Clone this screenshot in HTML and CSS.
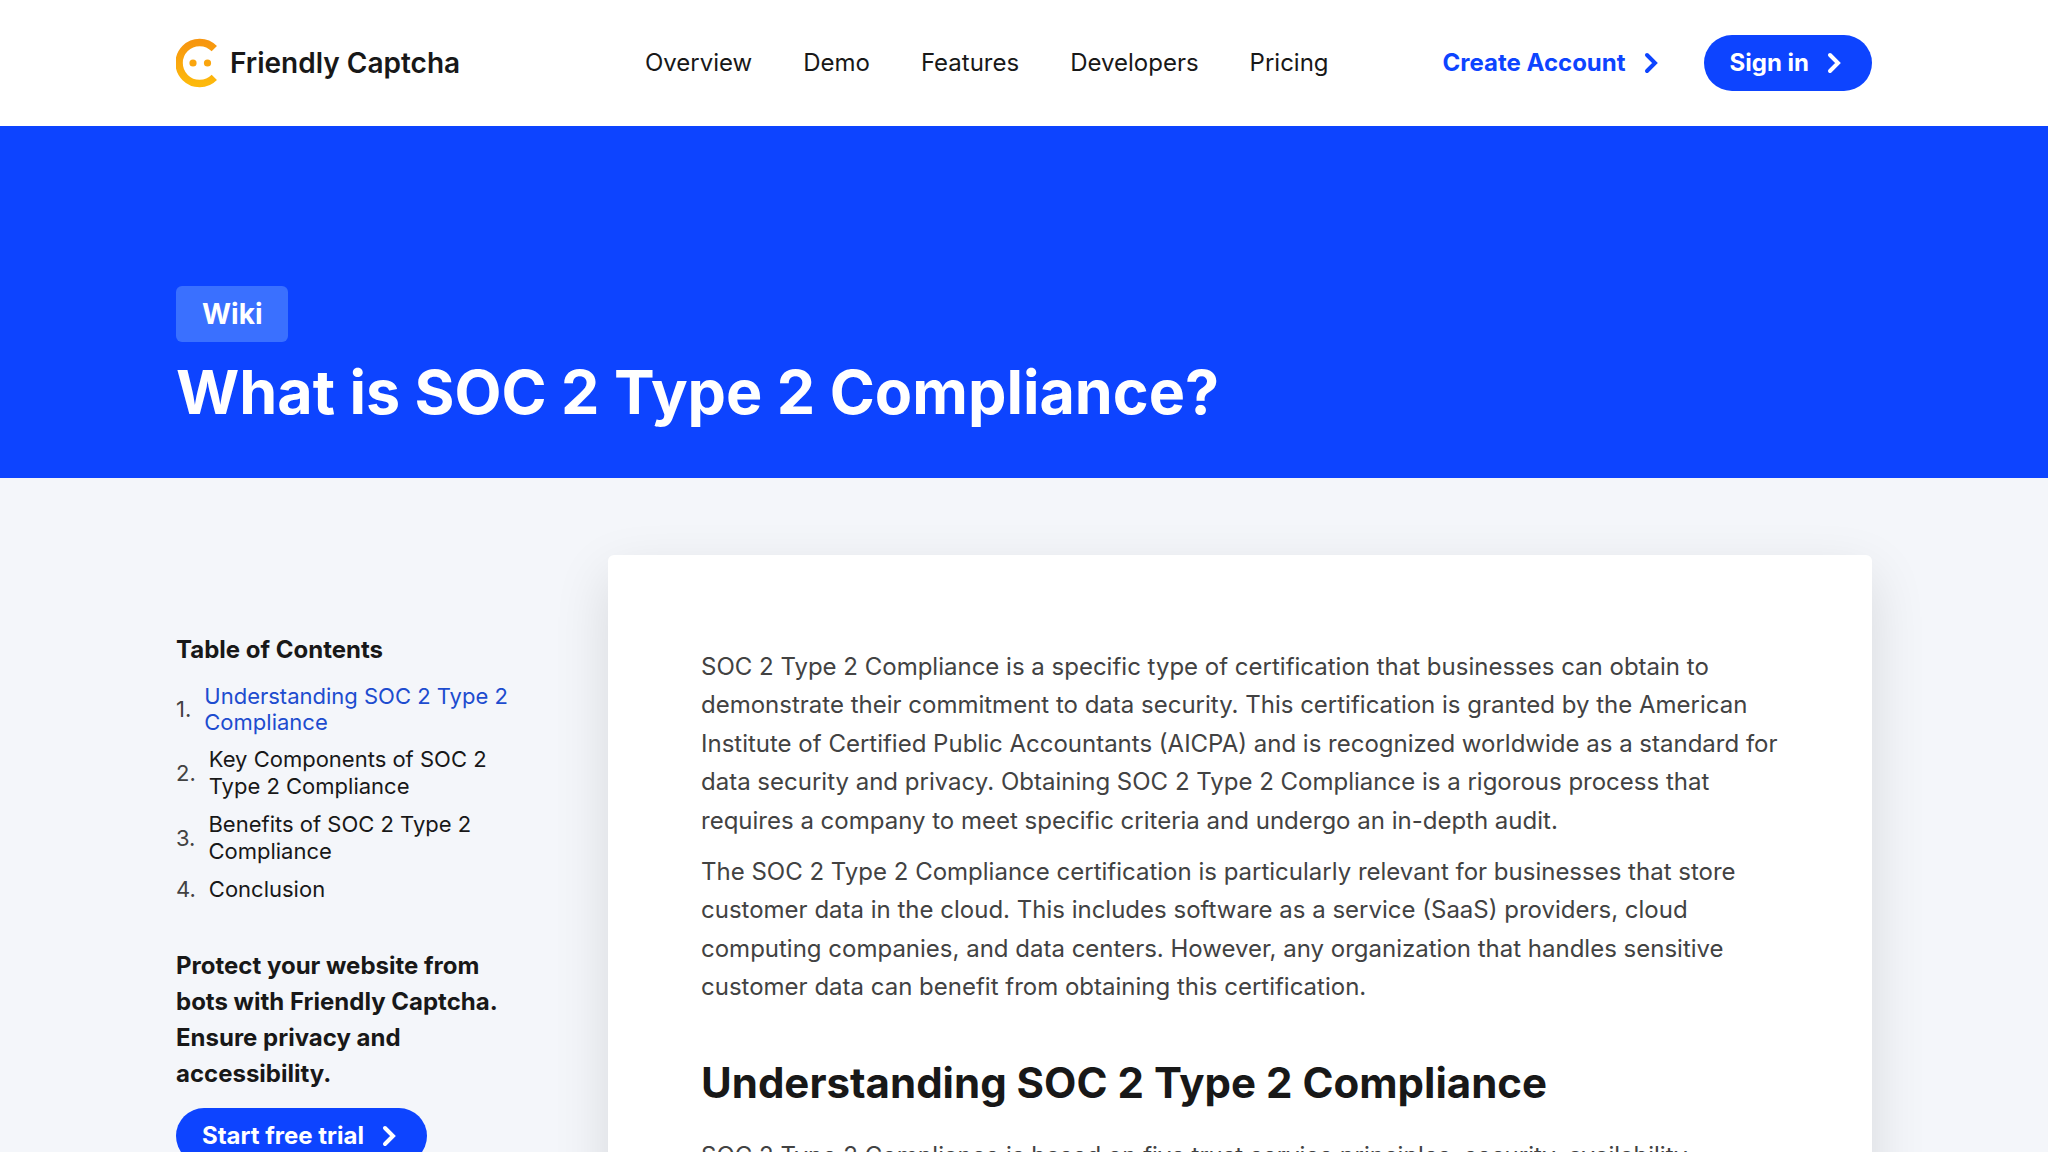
FILE: index.html
```html
<!DOCTYPE html>
<html lang="en">
<head>
  <meta charset="UTF-8">
  <meta name="viewport" content="width=device-width, initial-scale=1.0">
  <title>What is SOC 2 Type 2 Compliance? - Friendly Captcha</title>
  <link rel="stylesheet" href="styles.css">
</head>
<body>

  <header class="header">
    <div class="container header-inner">
      <a class="logo" href="#">
        <svg class="logo-icon" viewBox="0 0 42 50" aria-hidden="true">
          <defs>
            <linearGradient id="logoGradient" x1="0" y1="0" x2="0" y2="1">
              <stop offset="0" stop-color="#f7960f"/>
              <stop offset="1" stop-color="#fdb90c"/>
            </linearGradient>
          </defs>
          <path d="M38.3 10.7A20.5 20.5 0 1 0 38.3 39.3" fill="none" stroke="url(#logoGradient)" stroke-width="7.4"/>
          <circle cx="17" cy="25" r="3.6" fill="#faa50e"/>
          <circle cx="31.5" cy="25" r="3.6" fill="#faa50e"/>
        </svg>
        <span>Friendly Captcha</span>
      </a>

      <nav class="nav">
        <a href="#">Overview</a>
        <a href="#">Demo</a>
        <a href="#">Features</a>
        <a href="#">Developers</a>
        <a href="#">Pricing</a>
      </nav>

      <div class="actions">
        <a class="link-button" href="#">
          Create Account
          <svg class="chevron" viewBox="0 0 14 22" aria-hidden="true"><path d="M3 3l8 8-8 8"/></svg>
        </a>
        <a class="button" href="#">
          Sign in
          <svg class="chevron" viewBox="0 0 14 22" aria-hidden="true"><path d="M3 3l8 8-8 8"/></svg>
        </a>
      </div>
    </div>
  </header>

  <section class="hero">
    <div class="container">
      <a class="tag" href="#">Wiki</a>
      <h1>What is SOC 2 Type 2 Compliance?</h1>
    </div>
  </section>

  <main class="container content">
    <aside class="sidebar">
      <h2 class="toc-title">Table of Contents</h2>
      <ol class="toc">
        <li><a class="active" href="#understanding">Understanding SOC 2 Type 2 Compliance</a></li>
        <li><a href="#components">Key Components of SOC 2 Type 2 Compliance</a></li>
        <li><a href="#benefits">Benefits of SOC 2 Type 2 Compliance</a></li>
        <li><a href="#conclusion">Conclusion</a></li>
      </ol>
      <p class="promo">Protect your website from bots with Friendly Captcha. Ensure privacy and accessibility.</p>
      <a class="button" href="#">
        Start free trial
        <svg class="chevron" viewBox="0 0 14 22" aria-hidden="true"><path d="M3 3l8 8-8 8"/></svg>
      </a>
    </aside>

    <article class="article">
      <p>SOC 2 Type 2 Compliance is a specific type of certification that businesses can obtain to demonstrate their commitment to data security. This certification is granted by the American Institute of Certified Public Accountants (AICPA) and is recognized worldwide as a standard for data security and privacy. Obtaining SOC 2 Type 2 Compliance is a rigorous process that requires a company to meet specific criteria and undergo an in-depth audit.</p>
      <p>The SOC 2 Type 2 Compliance certification is particularly relevant for businesses that store customer data in the cloud. This includes software as a service (SaaS) providers, cloud computing companies, and data centers. However, any organization that handles sensitive customer data can benefit from obtaining this certification.</p>
      <h2 id="understanding">Understanding SOC 2 Type 2 Compliance</h2>
      <p>SOC 2 Type 2 Compliance is based on five trust service principles, security, availability,</p>
    </article>
  </main>

</body>
</html>
```

FILE: styles.css
```css
* {
  box-sizing: border-box;
}

body {
  margin: 0;
  font-family: Inter, sans-serif;
  font-size: 24px;
  line-height: 1.6;
  color: #424242;
  background-color: #f4f6fa;
}

a {
  color: #181818;
  text-decoration: none;
}

.container {
  max-width: 1744px;
  margin: 0 auto;
  padding: 0 24px;
}

/* Header */
.header {
  background-color: #fff;
}

.header-inner {
  display: flex;
  align-items: center;
  padding-top: 35px;
  padding-bottom: 35px;
}

.logo {
  display: flex;
  align-items: center;
  gap: 12px;
  font-size: 28px;
  font-weight: 600;
  line-height: 56px;
}

.logo-icon {
  width: 42px;
  height: 50px;
}

.nav {
  display: flex;
  gap: 51px;
  margin-left: auto;
}

.actions {
  display: flex;
  align-items: center;
  gap: 46px;
  margin-left: 114px;
}

.link-button,
.button {
  display: inline-flex;
  align-items: center;
  gap: 18px;
  font-weight: 700;
  line-height: 56px;
}

.link-button {
  color: #0d44ff;
}

.button {
  padding: 0 31px 0 26px;
  border-radius: 28px;
  color: #fff;
  background-color: #0d44ff;
}

.chevron {
  width: 14px;
  height: 22px;
  fill: none;
  stroke: currentColor;
  stroke-width: 4;
  stroke-linecap: round;
}

/* Hero */
.hero {
  padding: 160px 0 46px;
  background-color: #0d44ff;
}

.tag {
  display: inline-block;
  padding: 0 26px;
  border-radius: 6px;
  font-size: 28px;
  font-weight: 700;
  line-height: 56px;
  color: #fff;
  background-color: #3a70ff;
}

.hero h1 {
  margin: 10px 0 0;
  font-size: 61px;
  line-height: 80px;
  color: #fff;
}

/* Content */
.content {
  display: grid;
  grid-template-columns: 344px 1fr;
  gap: 88px;
  padding-top: 77px;
}

.sidebar {
  padding-top: 77px;
}

.toc-title {
  margin: 0 0 15px;
  font-size: 24px;
  line-height: 36px;
  color: #181818;
}

.toc {
  display: flex;
  flex-direction: column;
  gap: 11px;
  margin: 0 0 45px;
  padding: 0;
  list-style: none;
  counter-reset: toc;
  font-size: 22px;
  line-height: 27px;
}

.toc li {
  display: flex;
  align-items: center;
  gap: 13px;
  counter-increment: toc;
}

.toc li::before {
  content: counter(toc) ".";
}

.toc .active {
  line-height: 26px;
  color: #1d4ccf;
}

.promo {
  margin: 0 0 16px;
  font-weight: 700;
  line-height: 36px;
  color: #181818;
}

.article {
  padding: 93px;
  border-radius: 6px;
  background-color: #fff;
  box-shadow: 0 20px 56px rgba(0, 0, 0, 0.12);
}

.article p {
  margin: 0 0 13px;
}

.article h2 {
  margin: 48px 0 26px;
  font-size: 42px;
  line-height: 56px;
  color: #181818;
}
```
